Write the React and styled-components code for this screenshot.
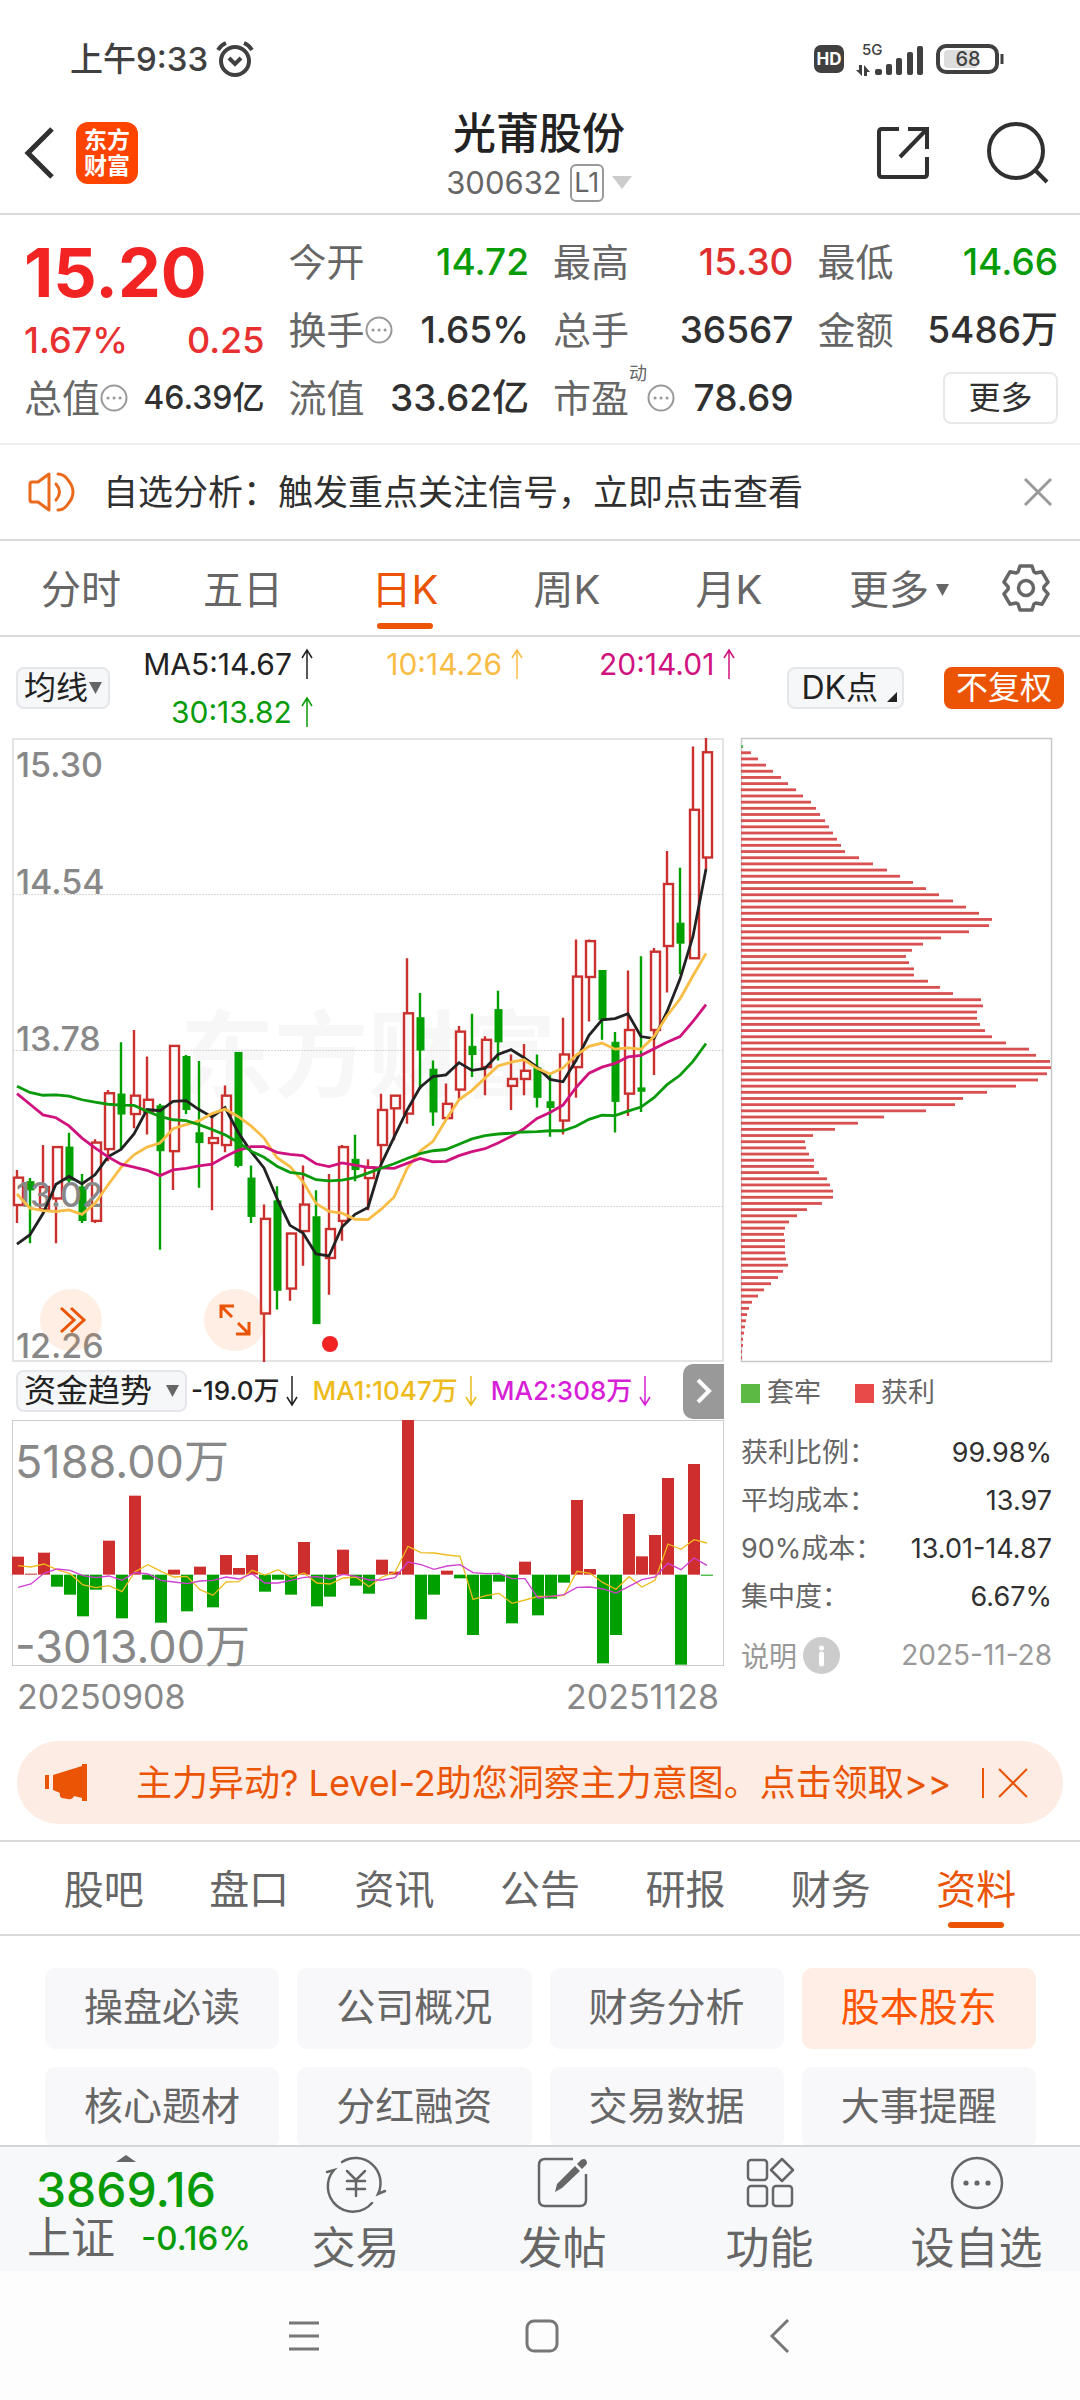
import React, { useState } from "react";
import styled, { createGlobalStyle } from "styled-components";

const GlobalStyle = createGlobalStyle`
	* {
		box-sizing: border-box;
	}
	body {
		margin: 0;
		background: #fff;
		color: #303030;
		font-family: Inter, "Noto Sans CJK SC", sans-serif;
	}
	button,
	select {
		margin: 0;
		padding: 0;
		border: 0;
		background: none;
		color: inherit;
		font: inherit;
		cursor: pointer;
	}
	svg {
		display: block;
		flex: none;
		overflow: visible;
	}
	a {
		color: inherit;
		text-decoration: none;
	}
`;

const Page = styled.div`
	display: flex;
	flex-direction: column;
	height: 100vh;
	overflow: hidden;
`;

/* ---------- status bar and header ---------- */

const StatusBar = styled.div`
	display: flex;
	align-items: center;
	justify-content: space-between;
	height: 80px;
	padding: 38px 78px 0 70px;
	color: #404040;
	font-size: 33px;
	font-weight: 500;
	line-height: 40px;
	flex: none;
`;
const StatusGroup = styled.div`
	display: flex;
	align-items: center;
	gap: ${(props) => props.$gap}px;
`;
const Header = styled.header`
	display: grid;
	grid-template-columns: 1fr auto 1fr;
	align-items: center;
	height: 135px;
	padding: 12px 32px 0 24px;
	border-bottom: 2px solid #d9d9d9;
	flex: none;
`;
const HeaderSide = styled.div`
	display: flex;
	align-items: center;
	justify-content: ${(props) => (props.$end ? "flex-end" : "flex-start")};
	gap: ${(props) => (props.$end ? 56 : 20)}px;
`;
const Logo = styled.a`
	display: flex;
	flex-direction: column;
	align-items: center;
	justify-content: center;
	width: 62px;
	height: 62px;
	border-radius: 12px;
	background: #ff4400;
	color: #fff;
	font-size: 23px;
	font-weight: 700;
	line-height: 26px;
`;
const Title = styled.div`
	display: flex;
	flex-direction: column;
	align-items: center;
	padding: 8px 0 0 6px;
	h1 {
		margin: 0;
		font-size: 43px;
		font-weight: 500;
		line-height: 52px;
		color: #222;
	}
`;
const Code = styled.button`
	display: flex;
	align-items: center;
	gap: 8px;
	color: #666;
	font-size: 31px;
	line-height: 48px;
`;
const Level = styled.span`
	width: 34px;
	height: 38px;
	border: 2px solid #999;
	border-radius: 6px;
	font-size: 27px;
	line-height: 34px;
	text-align: center;
`;

/* ---------- quote ---------- */

const Quote = styled.section`
	display: grid;
	grid-template-columns: repeat(4, 1fr);
	gap: 24px;
	padding: 13px 22px 11px 24px;
	border-bottom: 2px solid #eee;
	flex: none;
`;
const QuoteCol = styled.div`
	display: flex;
	flex-direction: column;
`;
const Price = styled.div`
	height: 88px;
	color: #f12323;
	font-size: 68px;
	font-weight: 700;
	line-height: 88px;
`;
const Change = styled.div`
	display: flex;
	justify-content: space-between;
	height: 48px;
	color: #e83030;
	font-size: 36px;
	font-weight: 500;
	line-height: 48px;
`;
const Cell = styled.div`
	display: flex;
	align-items: center;
	height: 68px;
	font-size: 38px;
	line-height: 48px;
	color: #666;
	white-space: nowrap;
	b {
		margin-left: auto;
		font-size: ${(props) => (props.$small ? 32 : 37)}px;
		font-weight: 500;
		color: ${(props) => props.$color || "#303030"};
	}
	sup {
		align-self: flex-start;
		font-size: 18px;
		line-height: 20px;
	}
`;
const MoreButton = styled.button`
	align-self: flex-end;
	width: 115px;
	height: 52px;
	margin-top: 8px;
	border: 2px solid #e8e8e8;
	border-radius: 8px;
	font-size: 32px;
	line-height: 44px;
`;

/* ---------- notice ---------- */

const Notice = styled.section`
	display: flex;
	align-items: center;
	height: 96px;
	padding: 0 28px;
	border-bottom: 2px solid #d9d9d9;
	font-size: 35px;
	line-height: 48px;
	flex: none;
	a {
		flex: 1;
		padding-left: 28px;
	}
`;

/* ---------- tabs ---------- */

const Tabs = styled.nav`
	display: grid;
	grid-template-columns: ${(props) => props.$columns};
	height: 96px;
	padding: 0 ${(props) => props.$pad || 0}px;
	border-top: ${(props) => (props.$top ? "2px solid #d9d9d9" : "0")};
	border-bottom: 2px solid #d9d9d9;
	flex: none;
`;
const Tab = styled.button`
	position: relative;
	display: flex;
	align-items: center;
	justify-content: center;
	gap: 7px;
	padding-top: 4px;
	font-size: 40px;
	line-height: 48px;
	color: ${(props) => (props.$active ? "#ea5404" : "#666")};
	&::after {
		content: "";
		position: absolute;
		bottom: 6px;
		width: 56px;
		height: 6px;
		border-radius: 3px;
		background: ${(props) => (props.$active ? "#ea5404" : "transparent")};
	}
`;
const MoreTab = styled(Tab)`
	padding-left: 16px;
`;
const TabIcon = styled.button`
	display: flex;
	align-items: center;
	justify-content: center;
`;

/* ---------- average line legend ---------- */

const Averages = styled.section`
	display: flex;
	align-items: center;
	height: 101px;
	padding: 0 16px;
	flex: none;
`;
const Picker = styled.label`
	display: inline-flex;
	align-items: center;
	gap: ${(props) => props.$gap || 0}px;
	height: 42px;
	padding: 0 6px;
	border: 2px solid #e4e6ea;
	border-radius: 8px;
	background: #f6f7f9;
	color: #222;
	font-size: 32px;
	line-height: 38px;
	flex: none;
	select {
		appearance: none;
		outline: none;
		line-height: 38px;
	}
`;
const AverageList = styled.div`
	display: grid;
	grid-template-columns: 179fr 208fr 210fr;
	justify-items: end;
	flex: 1;
	margin: 0 52px 0 22px;
`;
const Average = styled.span`
	display: flex;
	align-items: center;
	gap: 9px;
	color: ${(props) => props.$color};
	font-size: 30px;
	line-height: 48px;
	white-space: nowrap;
`;
const DkButton = styled.button`
	display: flex;
	align-items: flex-end;
	gap: 9px;
	height: 42px;
	padding: 0 5px 0 12px;
	border: 2px solid #e4e6ea;
	border-radius: 8px;
	background: #f6f7f9;
	font-size: 32px;
	line-height: 38px;
	color: #222;
	svg {
		margin-bottom: 5px;
	}
`;
const AdjustButton = styled.button`
	height: 42px;
	margin-left: 40px;
	padding: 0 12px;
	border-radius: 8px;
	background: #ea5404;
	color: #fff;
	font-size: 32px;
	line-height: 42px;
`;

/* ---------- charts ---------- */

const Charts = styled.section`
	display: grid;
	grid-template-columns: 712fr 311fr;
	column-gap: 17px;
	padding: 0 28px 0 12px;
	flex: none;
`;
const ChartBox = styled.div`
	position: relative;
	svg.chart {
		width: 100%;
		height: auto;
	}
`;
const RoundButton = styled.button`
	position: absolute;
	left: ${(props) => props.$left}%;
	bottom: 11px;
	display: flex;
	align-items: center;
	justify-content: center;
	width: 62px;
	height: 62px;
	border-radius: 50%;
	background: rgba(255, 120, 50, 0.13);
`;
const Indicator = styled.div`
	display: flex;
	align-items: center;
	height: 58px;
	padding-left: 4px;
	white-space: nowrap;
`;
const Flow = styled.span`
	display: flex;
	align-items: center;
	gap: 7px;
	margin-left: ${(props) => props.$left}px;
	color: ${(props) => props.$color};
	font-size: 26px;
	font-weight: 500;
	line-height: 40px;
`;
const NextButton = styled.button`
	display: flex;
	align-items: center;
	justify-content: center;
	width: 41px;
	height: 55px;
	margin-left: auto;
	border-radius: 10px 0 0 10px;
	background: #999;
`;
const Dates = styled.div`
	display: flex;
	justify-content: space-between;
	height: 62px;
	padding: 0 5px;
	color: #888;
	font-size: 34px;
	line-height: 62px;
`;
const Legend = styled.div`
	display: flex;
	align-items: center;
	gap: 34px;
	height: 62px;
	color: #666;
	font-size: 27px;
	line-height: 40px;
	span {
		display: flex;
		align-items: center;
		gap: 7px;
	}
	i {
		width: 19px;
		height: 19px;
	}
`;
const Stats = styled.dl`
	margin: 5px 0 0;
	div {
		display: flex;
		justify-content: space-between;
		font-size: 27px;
		line-height: 48px;
		white-space: nowrap;
	}
	dt {
		color: #666;
	}
	dd {
		margin: 0;
	}
`;
const StatsFoot = styled.div`
	display: flex;
	align-items: center;
	justify-content: space-between;
	height: 68px;
	color: #999;
	font-size: 28px;
	button {
		display: flex;
		align-items: center;
		gap: 6px;
	}
`;

/* ---------- banner ---------- */

const Banner = styled.section`
	display: flex;
	align-items: center;
	height: 83px;
	margin: 13px 17px 16px;
	padding: 0 35px 0 28px;
	border-radius: 42px;
	background: #fdece3;
	color: #ea5404;
	font-size: 36px;
	line-height: 48px;
	flex: none;
	a {
		flex: 1;
		padding-left: 49px;
		white-space: nowrap;
	}
	button {
		padding-left: 14px;
		border-left: 2px solid #ea5404;
	}
`;

/* ---------- tags ---------- */

const Tags = styled.section`
	display: grid;
	grid-template-columns: repeat(4, 1fr);
	grid-auto-rows: 81px;
	gap: 18px;
	flex: 1 1 0;
	min-height: 0;
	overflow: hidden;
	padding: 32px 44px 0 45px;
`;
const Tag = styled.button`
	padding-bottom: 4px;
	border-radius: 10px;
	background: ${(props) => (props.$active ? "#ffeee5" : "#f8f8fa")};
	color: ${(props) => (props.$active ? "#ff5500" : "#666")};
	font-size: 39px;
	line-height: 48px;
`;

/* ---------- bottom bars ---------- */

const BottomBar = styled.footer`
	display: flex;
	height: 126px;
	border-top: 2px solid #d3d5d9;
	background: #f7f8fa;
	color: #666;
	flex: none;
`;
const Index = styled.button`
	display: flex;
	flex-direction: column;
	align-items: center;
	width: 252px;
	padding-top: 8px;
	color: #079c07;
`;
const IndexValue = styled.div`
	font-size: 48px;
	font-weight: 500;
	line-height: 56px;
`;
const IndexName = styled.div`
	display: flex;
	align-items: center;
	gap: 26px;
	padding-left: 26px;
	font-size: 33px;
	font-weight: 500;
	line-height: 40px;
	span {
		color: #666;
		font-size: 44px;
		font-weight: 400;
	}
`;
const Action = styled.button`
	display: flex;
	flex-direction: column;
	align-items: center;
	flex: 1;
	padding-top: 9px;
	font-size: 44px;
	line-height: 58px;
	svg {
		margin-bottom: 9px;
	}
`;
const SystemBar = styled.div`
	display: flex;
	align-items: center;
	justify-content: space-between;
	height: 129px;
	padding: 0 284px 0 288px;
	background: #fdfdfd;
	flex: none;
`;

/* ---------- data ---------- */

const RED = "#c9302e";
const GREEN = "#00a000";

// high, body top, body bottom, low, rising
const CANDLES = [
	[1078, 1097, 1164, 1208, 1],
	[1098, 1107, 1127, 1258, 0],
	[1017, 1120, 1175, 1180, 1],
	[1020, 1022, 1148, 1258, 1],
	[987, 1022, 1103, 1112, 0],
	[1088, 1120, 1202, 1208, 0],
	[1003, 1011, 1203, 1208, 1],
	[882, 890, 1027, 1057, 1],
	[765, 892, 941, 1028, 0],
	[735, 896, 941, 976, 1],
	[800, 906, 935, 991, 1],
	[916, 921, 1031, 1274, 0],
	[773, 774, 1032, 1127, 1],
	[796, 800, 930, 941, 0],
	[811, 987, 1011, 1122, 0],
	[940, 1000, 1012, 1177, 1],
	[871, 896, 1017, 1035, 1],
	[790, 790, 1067, 1072, 0],
	[1067, 1098, 1192, 1208, 0],
	[1163, 1198, 1430, 1549, 1],
	[1118, 1154, 1373, 1420, 0],
	[1232, 1234, 1369, 1399, 1],
	[1067, 1163, 1228, 1313, 1],
	[1128, 1193, 1455, 1455, 0],
	[1088, 1223, 1294, 1384, 1],
	[1017, 1022, 1203, 1252, 1],
	[992, 1052, 1077, 1106, 0],
	[1052, 1072, 1098, 1177, 1],
	[891, 931, 1017, 1062, 1],
	[895, 896, 927, 1005, 1],
	[559, 694, 940, 965, 1],
	[644, 705, 784, 880, 0],
	[810, 831, 936, 970, 0],
	[866, 916, 951, 953, 1],
	[725, 739, 881, 905, 1],
	[695, 775, 795, 850, 0],
	[750, 759, 826, 895, 1],
	[639, 685, 764, 810, 0],
	[795, 855, 872, 931, 1],
	[769, 835, 855, 895, 1],
	[795, 828, 900, 925, 0],
	[845, 911, 925, 997, 0],
	[705, 795, 957, 991, 1],
	[513, 604, 826, 901, 1],
	[513, 517, 605, 714, 1],
	[589, 589, 709, 759, 0],
	[740, 765, 910, 986, 0],
	[589, 735, 891, 946, 1],
	[554, 877, 885, 936, 0],
	[534, 543, 735, 845, 1],
	[296, 377, 529, 643, 1],
	[337, 473, 522, 598, 0],
	[40, 195, 559, 560, 1],
	[19, 54, 312, 340, 1],
];

const MA_LINES = [
	{
		color: "#222",
		values: [
			1260, 1237, 1185, 1113, 1094, 1112, 1090, 1046, 1028, 990, 930, 933, 910,
			908, 930, 948, 925, 985, 1033, 1073, 1148, 1214, 1233, 1284, 1289, 1218,
			1187, 1170, 1065, 998, 932, 876, 849, 845, 815, 834, 829, 795, 783, 803,
			826, 856, 862, 810, 748, 710, 707, 695, 751, 756, 690, 610, 505, 340,
		],
	},
	{
		color: "#f9bc45",
		values: [
			1137, 1172, 1178, 1180, 1176, 1187, 1160, 1115, 1072, 1041, 1022, 1012,
			977, 967, 958, 940, 929, 947, 970, 1000, 1048, 1070, 1107, 1160, 1180,
			1184, 1199, 1200, 1175, 1145, 1075, 1032, 1008, 955, 906, 883, 853, 823,
			814, 808, 829, 843, 828, 797, 775, 767, 782, 779, 782, 751, 700, 659,
			602, 547,
		],
	},
	{
		color: "#d0127e",
		values: [
			891, 917, 943, 950, 970, 1000, 1024, 1046, 1064, 1071, 1079, 1092, 1078,
			1074, 1068, 1064, 1046, 1030, 1021, 1021, 1035, 1040, 1043, 1063, 1070,
			1061, 1066, 1072, 1073, 1074, 1062, 1050, 1058, 1057, 1043, 1033, 1026,
			1012, 996, 977, 952, 937, 919, 876, 841, 826, 817, 801, 797, 781, 765,
			751, 714, 673,
		],
	},
	{
		color: "#0b9a0b",
		values: [
			873, 888, 895, 894, 897, 906, 912, 917, 919, 920, 934, 947, 955, 957,
			967, 979, 992, 1010, 1032, 1047, 1069, 1084, 1088, 1102, 1105, 1103,
			1097, 1086, 1074, 1063, 1050, 1038, 1031, 1028, 1015, 1002, 994, 990,
			988, 985, 984, 982, 982, 971, 954, 944, 945, 934, 924, 901, 869, 846,
			812, 768,
		],
	},
];

const CHIPS = [
	0, 2, 10, 17, 25, 32, 40, 47, 55, 62, 70, 75, 79, 84, 88, 92, 96, 100, 104,
	118, 132, 146, 159, 172, 185, 198, 212, 225, 238, 251, 248, 228, 200, 182,
	171, 165, 168, 173, 173, 187, 199, 212, 240, 242, 236, 236, 239, 244, 251,
	265, 288, 295, 309, 310, 306, 297, 275, 246, 222, 214, 185, 143, 117, 94, 72,
	64, 65, 68, 73, 73, 78, 86, 89, 92, 92, 81, 66, 56, 48, 44, 43, 44, 44, 44,
	45, 47, 42, 37, 30, 23, 17, 11, 8, 6, 5, 4, 3, 2, 2, 1, 1,
];

// end of every bar, measured against the zero line at 675
const FLOWS = [
	621, 672, 609, 711, 735, 800, 720, 573, 806, 438, 690, 819, 660, 785, 651,
	773, 616, 655, 616, 726, 690, 735, 577, 770, 741, 600, 708, 732, 630, 666,
	211, 809, 735, 663, 686, 856, 748, 696, 821, 636, 797, 747, 699, 451, 658,
	941, 856, 493, 620, 556, 385, 945, 343, 678,
];
const FLOW_LINES = [
	{
		color: "#eebb1c",
		values: [
			648, 652, 643, 660, 672, 706, 714, 708, 726, 666, 645, 665, 682, 680,
			720, 737, 697, 696, 662, 676, 660, 683, 670, 700, 703, 685, 682, 711,
			682, 668, 590, 609, 610, 616, 620, 749, 738, 731, 761, 751, 740, 740,
			738, 665, 671, 699, 719, 681, 712, 692, 583, 599, 570, 580,
		],
	},
	{
		color: "#cf3fd0",
		values: [
			713, 703, 671, 658, 662, 678, 684, 679, 692, 668, 673, 692, 697, 702,
			694, 692, 682, 688, 672, 700, 700, 692, 683, 681, 688, 674, 680, 691,
			691, 684, 637, 645, 659, 649, 645, 669, 672, 671, 687, 687, 745, 740,
			735, 713, 712, 718, 730, 710, 690, 682, 641, 660, 625, 647,
		],
	},
];

const STATS = [
	["获利比例：", "99.98%"],
	["平均成本：", "13.97"],
	["90%成本：", "13.01-14.87"],
	["集中度：", "6.67%"],
];
const PERIODS = ["分时", "五日", "日K", "周K", "月K"];
const SECTIONS = ["股吧", "盘口", "资讯", "公告", "研报", "财务", "资料"];
const TAGS = [
	"操盘必读",
	"公司概况",
	"财务分析",
	"股本股东",
	"核心题材",
	"分红融资",
	"交易数据",
	"大事提醒",
];

/* ---------- icons ---------- */

const Caret = ({ w = 13, h = 12, color = "#666", up }) => (
	<svg width={w} height={h} viewBox="0 0 10 10" preserveAspectRatio="none">
		<path d={up ? "M0 10H10L5 0Z" : "M0 0H10L5 10Z"} fill={color} />
	</svg>
);

const Arrow = ({ down }) => (
	<svg width="12" height="30" viewBox="0 0 12 30" fill="none">
		<path
			d={down ? "M6 0V28M1 21L6 29L11 21" : "M6 30V2M1 9L6 1L11 9"}
			stroke="currentColor"
			strokeWidth="1.5"
		/>
	</svg>
);

const Cross = ({ size, color, width = 3 }) => (
	<svg width={size} height={size} viewBox="0 0 28 28">
		<path d="M1 1L27 27M27 1L1 27" stroke={color} strokeWidth={width} />
	</svg>
);

const Dots = () => (
	<svg width="28" height="28" viewBox="0 0 28 28" fill="none">
		<circle cx="14" cy="14" r="12.5" stroke="#999" strokeWidth="2" />
		<path
			d="M8 14h.1M14 14h.1M20 14h.1"
			stroke="#999"
			strokeWidth="3"
			strokeLinecap="round"
		/>
	</svg>
);

const Gear = () => {
	const tooth = [
		[-8, -16],
		[-6, -22],
		[6, -22],
		[8, -16],
	];
	const points = [0, 60, 120, 180, 240, 300].flatMap((deg) => {
		const a = (deg * Math.PI) / 180;
		return tooth.map(([x, y]) => [
			24 + x * Math.cos(a) - y * Math.sin(a),
			24 + x * Math.sin(a) + y * Math.cos(a),
		]);
	});
	return (
		<svg width="48" height="48" viewBox="0 0 48 48" fill="none">
			<polygon
				points={points.join(" ")}
				stroke="#666"
				strokeWidth="3.5"
				strokeLinejoin="round"
			/>
			<circle cx="24" cy="24" r="7.5" stroke="#666" strokeWidth="3.5" />
		</svg>
	);
};

const AlarmIcon = () => (
	<svg width="38" height="36" viewBox="0 0 38 36" fill="none" stroke="#404040">
		<circle cx="19" cy="20" r="14" strokeWidth="4" />
		<path d="M2 9Q5 4 10 2M36 9Q33 4 28 2" strokeWidth="4" />
		<path d="M13 17L19 23L25 17" strokeWidth="4" />
	</svg>
);

const HdBadge = styled.span`
	width: 30px;
	height: 28px;
	border-radius: 7px;
	background: #404040;
	color: #fff;
	font-size: 17px;
	font-weight: 700;
	line-height: 28px;
	text-align: center;
`;

const SignalIcon = () => (
	<svg width="68" height="36" viewBox="0 0 68 36" fill="#404040">
		<text x="6" y="14" fontSize="15">
			5G
		</text>
		<path d="M3 24h3v11L0 29h3zM9 35h-1V24l6 7h-3v4z" />
		<rect x="19" y="28" width="7" height="6" rx="2" />
		<rect x="30" y="23" width="6" height="11" rx="2" />
		<rect x="40" y="17" width="6" height="17" rx="2" />
		<rect x="51" y="11" width="6" height="23" rx="2" />
		<rect x="61" y="5" width="6" height="29" rx="2" />
	</svg>
);

const BatteryIcon = () => (
	<svg width="66" height="30" viewBox="0 0 66 30" fill="none">
		<rect x="8" y="6" width="34" height="18" rx="4" fill="#ddd" />
		<rect
			x="2"
			y="2"
			width="59"
			height="26"
			rx="8"
			stroke="#404040"
			strokeWidth="4"
		/>
		<path d="M66 10v10" stroke="#404040" strokeWidth="3" />
		<text
			x="32"
			y="22"
			fontSize="20"
			fontWeight="500"
			textAnchor="middle"
			fill="#404040"
		>
			68
		</text>
	</svg>
);

const SpeakerIcon = () => (
	<svg
		width="47"
		height="40"
		viewBox="0 0 47 40"
		fill="none"
		stroke="#ea6a1c"
		strokeWidth="3"
		strokeLinejoin="round"
		strokeLinecap="round"
	>
		<path d="M10 10H4Q2 10 2 12V28Q2 30 4 30H10L21 38V2L10 10" />
		<path d="M28 12Q35 20 28 28" />
		<path d="M30 2Q36 2 40 8Q45 14 45 20Q45 26 40 32Q36 38 30 38" />
	</svg>
);

const HornIcon = () => (
	<svg width="42" height="37" viewBox="0 0 42 37" fill="#ea5404">
		<path d="M0 11h4v14H0zM8 11L37 2V0h5v37h-5v-3l-8-2q-2 4-6 3l-6-1q-3-1-2-5L8 26z" />
	</svg>
);

const TradeIcon = () => (
	<svg
		width="60"
		height="54"
		viewBox="0 0 60 54"
		fill="none"
		stroke="#666"
		strokeWidth="2.5"
		strokeLinecap="round"
	>
		<path d="M16 6A25 25 0 0 1 52 38L59 35" />
		<path d="M46 47A25 25 0 0 1 8 14L1 16" />
		<path d="M21 15L30 24L39 15M30 24V40M21 25H39M21 33H39" />
	</svg>
);

const PostIcon = () => (
	<svg width="52" height="54" viewBox="0 0 52 54" fill="none">
		<path
			d="M36 3H8Q2 3 2 9V44Q2 50 8 50H43Q49 50 49 44V18"
			stroke="#666"
			strokeWidth="2.5"
		/>
		<path
			d="M18 36L20 28L38 10L43 15L25 32ZM40 8L44 4Q47 2 49 4Q51 7 49 9L45 13Z"
			fill="#666"
		/>
	</svg>
);

const AppsIcon = () => (
	<svg
		width="50"
		height="54"
		viewBox="0 0 50 54"
		fill="none"
		stroke="#666"
		strokeWidth="2.5"
		strokeLinejoin="round"
	>
		<rect x="3" y="4" width="19" height="20" rx="3" />
		<rect x="3" y="30" width="19" height="20" rx="3" />
		<rect x="28" y="30" width="19" height="20" rx="3" />
		<path d="M37 3L48 14L37 25L26 14Z" />
	</svg>
);

const WatchIcon = () => (
	<svg width="54" height="54" viewBox="0 0 54 54" fill="none">
		<circle cx="27" cy="27" r="25" stroke="#666" strokeWidth="2.5" />
		<circle cx="16" cy="27" r="2.6" fill="#666" />
		<circle cx="27" cy="27" r="2.6" fill="#666" />
		<circle cx="38" cy="27" r="2.6" fill="#666" />
	</svg>
);

/* ---------- chart parts ---------- */

const candleX = (index) => 5 + index * 13;
const toLine = (values, x, y) =>
	values.map((value, index) => `${x(index)},${y(value)}`).join(" ");

const KLineChart = () => {
	const y = (value) => ((value - 19) / 1530) * 624;
	const prices = ["15.30", "14.54", "13.78", "13.02", "12.26"];
	const labelY = [39, 156, 313, 469, 620];
	return (
		<svg className="chart" viewBox="0 0 712 624">
			<text x="168" y="352" fontSize="94" fontWeight="700" fill="#f7f7f7">
				东方财富
			</text>
			<rect
				x="1"
				y="1"
				width="710"
				height="622"
				fill="none"
				stroke="#e4e4e4"
				strokeWidth="2"
			/>
			{[156, 312, 468].map((lineY) => (
				<path
					key={lineY}
					d={`M1 ${lineY}.5H711`}
					stroke="#d8d8d8"
					strokeDasharray="2 1"
				/>
			))}
			{CANDLES.map(([high, top, bottom, low, up], index) => {
				const x = candleX(index);
				const color = up ? RED : GREEN;
				return (
					<g key={index} stroke={color} strokeWidth="2.4">
						<path d={`M${x} ${y(high)}V${y(top)}M${x} ${y(bottom)}V${y(low)}`} />
						{up ? (
							<rect
								x={x - 3}
								y={y(top)}
								width="9"
								height={y(bottom) - y(top)}
								fill="none"
							/>
						) : (
							<rect
								x={x - 3}
								y={y(top)}
								width="7"
								height={y(bottom) - y(top)}
								fill={color}
								strokeWidth="1"
							/>
						)}
					</g>
				);
			})}
			{prices.map((price, index) => (
				<text
					key={price}
					x="4"
					y={labelY[index]}
					fontSize="34"
					fontWeight="500"
					fill="#888"
				>
					{price}
				</text>
			))}
			{MA_LINES.map((line) => (
				<polyline
					key={line.color}
					points={toLine(line.values, candleX, y)}
					fill="none"
					stroke={line.color}
					strokeWidth="2.8"
				/>
			))}
			<circle cx="318" cy="606" r="8" fill="#f12323" />
		</svg>
	);
};

const FlowChart = () => {
	const y = (value) => (value - 211) / 3;
	const zero = y(675);
	const x = (index) => 6 + index * 13;
	return (
		<svg className="chart" viewBox="0 0 712 246">
			<rect
				x="0.5"
				y="0.5"
				width="711"
				height="245"
				fill="none"
				stroke="#ccc"
			/>
			{FLOWS.map((value, index) => (
				<rect
					key={index}
					x={index * 13}
					y={Math.min(y(value), zero)}
					width="12"
					height={Math.abs(y(value) - zero)}
					fill={value < 675 ? "#cf2e2e" : GREEN}
				/>
			))}
			{FLOW_LINES.map((line) => (
				<polyline
					key={line.color}
					points={toLine(line.values, x, y)}
					fill="none"
					stroke={line.color}
					strokeWidth="1.3"
				/>
			))}
			<text x="3" y="58" fontSize="45" fill="#888">
				5188.00万
			</text>
			<text x="3" y="243" fontSize="45" fill="#888">
				-3013.00万
			</text>
		</svg>
	);
};

const ChipChart = () => (
	<svg className="chart" viewBox="0 0 311 624">
		<rect
			x="0.5"
			y="0.5"
			width="310"
			height="623"
			fill="none"
			stroke="#c8c8c8"
			strokeWidth="1.5"
		/>
		{CHIPS.map((width, index) => (
			<rect
				key={index}
				x="0"
				y={1 + index * 6.174}
				width={width}
				height="2.8"
				fill={index < 2 ? "#5cb85c" : "#d95050"}
			/>
		))}
	</svg>
);

export default function App() {
	const [period, setPeriod] = useState("日K");
	const [section, setSection] = useState("资料");
	const [tag, setTag] = useState("股本股东");

	return (
		<Page>
			<GlobalStyle />
			<StatusBar>
				<StatusGroup $gap={8}>
					<span>上午9:33</span>
					<AlarmIcon />
				</StatusGroup>
				<StatusGroup $gap={12}>
					<HdBadge>HD</HdBadge>
					<SignalIcon />
					<BatteryIcon />
				</StatusGroup>
			</StatusBar>

			<Header>
				<HeaderSide>
					<button aria-label="返回">
						<svg width="32" height="56" viewBox="0 0 32 56" fill="none">
							<path d="M28 4L4 28L28 52" stroke="#303030" strokeWidth="5" />
						</svg>
					</button>
					<Logo href="#">
						<span>东方</span>
						<span>财富</span>
					</Logo>
				</HeaderSide>
				<Title>
					<h1>光莆股份</h1>
					<Code>
						300632
						<Level>L1</Level>
						<Caret w={20} h={13} color="#ccc" />
					</Code>
				</Title>
				<HeaderSide $end>
					<button aria-label="分享">
						<svg
							width="54"
							height="54"
							viewBox="0 0 54 54"
							fill="none"
							stroke="#303030"
							strokeWidth="4"
						>
							<path d="M23 3H6Q3 3 3 6V48Q3 51 6 51H48Q51 51 51 48V31M32 3H51V23M51 3L24 31" />
						</svg>
					</button>
					<button aria-label="搜索">
						<svg
							width="62"
							height="64"
							viewBox="0 0 62 64"
							fill="none"
							stroke="#303030"
							strokeWidth="4"
						>
							<circle cx="30" cy="30" r="27" />
							<path d="M49 49L61 61" />
						</svg>
					</button>
				</HeaderSide>
			</Header>

			<Quote>
				<QuoteCol>
					<Price>15.20</Price>
					<Change>
						<span>1.67%</span>
						<span>0.25</span>
					</Change>
					<Cell $small>
						总值
						<Dots />
						<b>46.39亿</b>
					</Cell>
				</QuoteCol>
				<QuoteCol>
					<Cell $color="#079c07">
						今开<b>14.72</b>
					</Cell>
					<Cell>
						换手
						<Dots />
						<b>1.65%</b>
					</Cell>
					<Cell>
						流值<b>33.62亿</b>
					</Cell>
				</QuoteCol>
				<QuoteCol>
					<Cell $color="#e02f2f">
						最高<b>15.30</b>
					</Cell>
					<Cell>
						总手<b>36567</b>
					</Cell>
					<Cell>
						市盈<sup>动</sup>
						<Dots />
						<b>78.69</b>
					</Cell>
				</QuoteCol>
				<QuoteCol>
					<Cell $color="#079c07">
						最低<b>14.66</b>
					</Cell>
					<Cell>
						金额<b>5486万</b>
					</Cell>
					<MoreButton>更多</MoreButton>
				</QuoteCol>
			</Quote>

			<Notice>
				<SpeakerIcon />
				<a href="#">自选分析：触发重点关注信号，立即点击查看</a>
				<button aria-label="关闭">
					<Cross size={28} color="#999" />
				</button>
			</Notice>

			<Tabs $columns="repeat(6, 3fr) 2fr">
				{PERIODS.map((name) => (
					<Tab
						key={name}
						$active={name === period}
						onClick={() => setPeriod(name)}
					>
						{name}
					</Tab>
				))}
				<MoreTab>
					更多
					<Caret />
				</MoreTab>
				<TabIcon aria-label="设置">
					<Gear />
				</TabIcon>
			</Tabs>

			<Averages>
				<Picker>
					<select aria-label="主图指标">
						<option>均线</option>
					</select>
					<Caret />
				</Picker>
				<AverageList>
					<Average $color="#222">
						MA5:14.67
						<Arrow />
					</Average>
					<Average $color="#f9bc45">
						10:14.26
						<Arrow />
					</Average>
					<Average $color="#d0127e">
						20:14.01
						<Arrow />
					</Average>
					<Average $color="#079c07">
						30:13.82
						<Arrow />
					</Average>
				</AverageList>
				<DkButton>
					DK点
					<svg width="10" height="10" viewBox="0 0 10 10">
						<path d="M10 0V10H0Z" fill="#222" />
					</svg>
				</DkButton>
				<AdjustButton>不复权</AdjustButton>
			</Averages>

			<Charts>
				<div>
					<ChartBox>
						<KLineChart />
						<RoundButton $left={4} aria-label="展开">
							<svg
								width="28"
								height="30"
								viewBox="0 0 28 30"
								fill="none"
								stroke="#ea5404"
								strokeWidth="3"
							>
								<path d="M4 3L17 15L4 27M14 3L27 15L14 27" />
							</svg>
						</RoundButton>
						<RoundButton $left={27} aria-label="全屏">
							<svg
								width="32"
								height="32"
								viewBox="0 0 32 32"
								fill="none"
								stroke="#ea5404"
								strokeWidth="3"
							>
								<path d="M2 14V2H15M2 2L13 13M30 18V30H17M30 30L19 19" />
							</svg>
						</RoundButton>
					</ChartBox>
					<Indicator>
						<Picker $gap={13}>
							<select aria-label="副图指标">
								<option>资金趋势</option>
							</select>
							<Caret />
						</Picker>
						<Flow $left={4} $color="#222">
							-19.0万
							<Arrow down />
						</Flow>
						<Flow $left={14} $color="#eebb1c">
							MA1:1047万
							<Arrow down />
						</Flow>
						<Flow $left={14} $color="#d81fd8">
							MA2:308万
							<Arrow down />
						</Flow>
						<NextButton aria-label="下一个">
							<svg width="16" height="26" viewBox="0 0 16 26" fill="none">
								<path d="M2 2L13 13L2 24" stroke="#fff" strokeWidth="4" />
							</svg>
						</NextButton>
					</Indicator>
					<ChartBox>
						<FlowChart />
					</ChartBox>
					<Dates>
						<span>20250908</span>
						<span>20251128</span>
					</Dates>
				</div>
				<div>
					<ChartBox>
						<ChipChart />
					</ChartBox>
					<Legend>
						<span>
							<i style={{ background: "#5bb944" }} />
							套牢
						</span>
						<span>
							<i style={{ background: "#e84a4a" }} />
							获利
						</span>
					</Legend>
					<Stats>
						{STATS.map(([name, value]) => (
							<div key={name}>
								<dt>{name}</dt>
								<dd>{value}</dd>
							</div>
						))}
					</Stats>
					<StatsFoot>
						<button>
							说明
							<svg width="37" height="37" viewBox="0 0 37 37">
								<circle cx="18.5" cy="18.5" r="18.5" fill="#ccc" />
								<path
									d="M18.5 11v.1M18.5 17v10"
									stroke="#fff"
									strokeWidth="5"
									strokeLinecap="round"
								/>
							</svg>
						</button>
						<span>2025-11-28</span>
					</StatsFoot>
				</div>
			</Charts>

			<Banner>
				<HornIcon />
				<a href="#">主力异动? Level-2助您洞察主力意图。点击领取&gt;&gt;</a>
				<button aria-label="关闭">
					<Cross size={30} color="#ea5404" width={2} />
				</button>
			</Banner>

			<Tabs $columns="repeat(7, 1fr)" $pad={31} $top>
				{SECTIONS.map((name) => (
					<Tab
						key={name}
						$active={name === section}
						onClick={() => setSection(name)}
					>
						{name}
					</Tab>
				))}
			</Tabs>

			<Tags>
				{TAGS.map((name) => (
					<Tag key={name} $active={name === tag} onClick={() => setTag(name)}>
						{name}
					</Tag>
				))}
			</Tags>

			<BottomBar>
				<Index>
					<Caret w={20} h={7} up />
					<IndexValue>3869.16</IndexValue>
					<IndexName>
						<span>上证</span>
						-0.16%
					</IndexName>
				</Index>
				<Action>
					<TradeIcon />
					交易
				</Action>
				<Action>
					<PostIcon />
					发帖
				</Action>
				<Action>
					<AppsIcon />
					功能
				</Action>
				<Action>
					<WatchIcon />
					设自选
				</Action>
			</BottomBar>

			<SystemBar>
				<svg width="32" height="32" viewBox="0 0 32 32">
					<path d="M1 3H31M1 16H31M1 29H31" stroke="#777" strokeWidth="3" />
				</svg>
				<svg width="34" height="34" viewBox="0 0 34 34" fill="none">
					<rect
						x="2"
						y="2"
						width="30"
						height="30"
						rx="7"
						stroke="#777"
						strokeWidth="3"
					/>
				</svg>
				<svg width="32" height="34" viewBox="0 0 32 34" fill="none">
					<path d="M24 1L8 17L24 33" stroke="#777" strokeWidth="3" />
				</svg>
			</SystemBar>
		</Page>
	);
}
